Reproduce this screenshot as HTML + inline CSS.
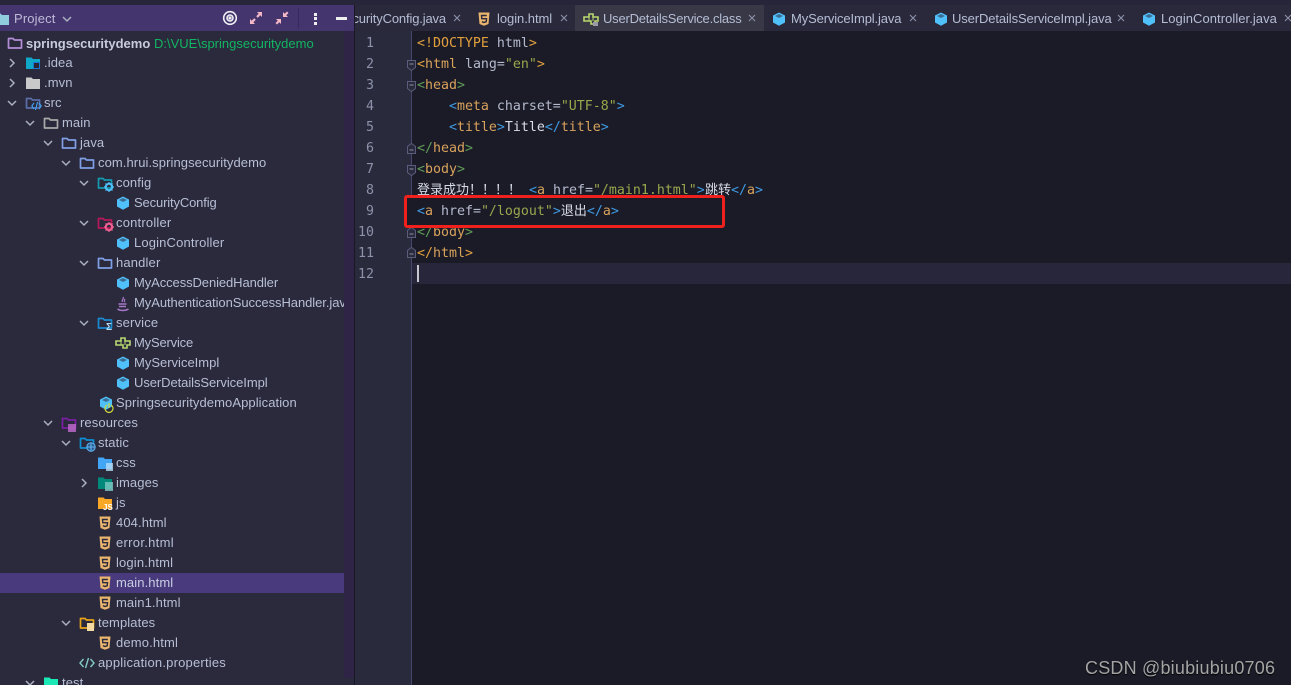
<!DOCTYPE html>
<html lang="zh"><head><meta charset="utf-8"><title>IDE</title>
<style>
html,body{margin:0;padding:0;background:#1b1b27;overflow:hidden}
#p{position:relative;width:1291px;height:685px;overflow:hidden;background:#1b1b27;font-family:"Liberation Sans","Noto Sans CJK SC",sans-serif}
#p div,#p svg{position:absolute}
.t{height:20px;line-height:20px;font-size:13px;color:#b7bfd6;white-space:nowrap;letter-spacing:.1px}
.i{width:16px;height:16px}
.c{font:13.28px/21px "DejaVu Sans Mono","Noto Sans CJK SC",monospace;height:21px;white-space:pre;color:#b4bacd;left:417px}
.n{font:13.28px/21px "DejaVu Sans Mono",monospace;height:21px;color:#8d92aa;width:30px;text-align:right;left:344px}
.b{color:#3f9ae2}.o{color:#e2a03c}.g{color:#5f9e57}.y{color:#d9a25c}.s{color:#9aa64c}.w{color:#d8dce8}.q{color:#b4bacd}
.k{font-size:13px;height:20px;line-height:20px;top:9px;color:#b5bdd4;white-space:nowrap}
.cj{display:inline-block;width:13px;color:#d8dce8;font-size:13px}
</style></head><body>
<div id="p">
<svg width="0" height="0" style="left:0;top:0">
<defs>
<symbol id="dn" viewBox="0 0 12 12"><path d="M2 4l4 4 4-4" fill="none" stroke="#aab0c0" stroke-width="1.500"/></symbol>
<symbol id="rt" viewBox="0 0 12 12"><path d="M4 2l4 4-4 4" fill="none" stroke="#aab0c0" stroke-width="1.500"/></symbol>
<symbol id="fo" viewBox="0 0 16 16"><path d="M1.500 3.500h4.500l1.500 1.500h7v8h-13z" fill="none" stroke="currentColor" stroke-width="1.700" stroke-linejoin="round"/></symbol>
<symbol id="ff" viewBox="0 0 16 16"><path d="M1 2.500h5.500l1.500 1.500h7v10H1z" fill="currentColor"/></symbol>
<symbol id="cu" viewBox="0 0 16 16"><path d="M8 1.500l6 3v7l-6 3.200-6-3.200v-7z" fill="#4fc0fa"/><path d="M4 5L8 3l4 2-4 2z" fill="#2b2a3c" opacity=".55"/></symbol>
<symbol id="h5" viewBox="0 0 16 16"><path d="M2.500 1.500h11l-1 11.500L8 14.800 3.500 13z" fill="#eab56e"/><path d="M10.800 4.500H5.500l.3 3.200h4.700l-.3 3L8 11.500l-2.100-.8" fill="none" stroke="#2b2a3c" stroke-width="1.400"/></symbol>
<symbol id="if" viewBox="0 0 16 16"><path d="M6 3h4v3h5v4h-3v3H8v-3H1V6h5z" fill="none" stroke="#b8d86e" stroke-width="1.600"/><path d="M6 6v4M10 6v4" stroke="#b8d86e"/></symbol>
<symbol id="xx" viewBox="0 0 8 8"><path d="M1 1l6 6M7 1L1 7" stroke="#8d92a8" stroke-width="1.100" fill="none"/></symbol>
</defs></svg>

<!-- chrome -->
<div style="left:0;top:0;width:1291px;height:5px;background:#26253a"></div>
<div style="left:0;top:31px;width:344px;height:654px;background:#2b2a3c"></div>
<div style="left:344px;top:31px;width:10px;height:647px;background:#2f2346"></div>
<div style="left:344px;top:678px;width:10px;height:7px;background:#2b2a3c"></div>
<div style="left:0;top:5px;width:354px;height:26px;background:#45356f"></div>
<div style="left:354px;top:5px;width:1px;height:680px;background:#191926"></div>
<div style="left:355px;top:5px;width:936px;height:26px;background:#2a293c"></div>
<div style="left:355px;top:31px;width:56px;height:654px;background:#292a3c"></div>
<div style="left:411px;top:31px;width:1px;height:654px;background:#45486c"></div>
<div style="left:0;top:573px;width:344px;height:20px;background:#483a7c"></div>
<div style="left:412px;top:263px;width:879px;height:21px;background:#27263a"></div>
<div style="left:417px;top:265px;width:2px;height:17px;background:#c4c6d0"></div>

<!-- project header -->
<svg class="i" style="left:-6px;top:11px;color:#8fcbdc"><use href="#ff"/></svg>
<div class="t" style="left:14px;top:9px;color:#bdbbd6;letter-spacing:.15px">Project</div>
<svg style="left:61px;top:13px" width="12" height="12"><use href="#dn" width="12" height="12"/></svg>
<svg style="left:222px;top:10px" width="16" height="16" viewBox="0 0 16 16" fill="none" stroke="#f0f0f4" stroke-width="1.600"><circle cx="8" cy="8" r="6.300"/><circle cx="8" cy="8" r="3"/><circle cx="8" cy="8" r=".8" fill="#f0f0f4"/></svg>
<svg style="left:249px;top:11px" width="14" height="14" viewBox="0 0 14 14" fill="#f4b8c6"><path d="M8 1h5v5l-1.700-1.700-2.500 2.500-1.600-1.600 2.500-2.500zM6 13H1V8l1.700 1.700 2.500-2.500 1.600 1.600-2.500 2.500z"/></svg>
<svg style="left:275px;top:11px" width="14" height="14" viewBox="0 0 14 14" fill="#f4b8c6"><path d="M13 6H8V1l1.700 1.700L12 .5l1.500 1.500-2.300 2.300zM1 8h5v5l-1.700-1.700L2 13.500.5 12l2.300-2.300z"/></svg>
<div style="left:298px;top:8px;width:1px;height:20px;background:#37295c"></div>
<div style="left:314px;top:13px;width:3px;height:3px;background:#eee"></div>
<div style="left:314px;top:17px;width:3px;height:3px;background:#eee"></div>
<div style="left:314px;top:22px;width:3px;height:3px;background:#eee"></div>
<div style="left:336px;top:17px;width:11px;height:3px;background:#eee"></div>

<!-- tree -->
<div style="left:0;top:1px;width:344px;height:684px;overflow:hidden">
<svg class="i" style="left:7px;top:34px;color:#b48ed6"><use href="#fo"/></svg>
<div class="t" style="left:26px;top:33px;font-weight:bold;color:#c6ccde;letter-spacing:0">springsecuritydemo</div>
<div class="t" style="left:154px;top:33px;color:#12b563;letter-spacing:0">D:\VUE\springsecuritydemo</div>

<svg style="left:6px;top:56px" width="12" height="12"><use href="#rt" width="12" height="12"/></svg>
<svg class="i" style="left:25px;top:54px;color:#10a8c8"><use href="#ff"/></svg>
<div style="left:33px;top:61px;width:7px;height:7px;background:#2a2433;border:1px solid #1976d2;box-sizing:border-box"></div>
<div class="t" style="left:44px;top:52px">.idea</div>

<svg style="left:6px;top:76px" width="12" height="12"><use href="#rt" width="12" height="12"/></svg>
<svg class="i" style="left:25px;top:74px;color:#c9c9c9"><use href="#ff"/></svg>
<div class="t" style="left:44px;top:72px">.mvn</div>

<svg style="left:6px;top:96px" width="12" height="12"><use href="#dn" width="12" height="12"/></svg>
<svg class="i" style="left:25px;top:94px;color:#5a6ea8"><use href="#fo"/></svg>
<svg style="left:31px;top:100px" width="11" height="10" viewBox="0 0 11 10" fill="none" stroke="#42a5f5" stroke-width="1.100"><path d="M3 2L.8 5 3 8M8 2l2.200 3L8 8M6.500 1L4.500 9"/></svg>
<div class="t" style="left:44px;top:92px">src</div>

<svg style="left:24px;top:116px" width="12" height="12"><use href="#dn" width="12" height="12"/></svg>
<svg class="i" style="left:43px;top:114px;color:#a9a9a9"><use href="#fo"/></svg>
<div class="t" style="left:62px;top:112px">main</div>

<svg style="left:42px;top:136px" width="12" height="12"><use href="#dn" width="12" height="12"/></svg>
<svg class="i" style="left:61px;top:134px;color:#7f9fe6"><use href="#fo"/></svg>
<div class="t" style="left:80px;top:132px">java</div>

<svg style="left:60px;top:156px" width="12" height="12"><use href="#dn" width="12" height="12"/></svg>
<svg class="i" style="left:79px;top:154px;color:#7f9fe6"><use href="#fo"/></svg>
<div class="t" style="left:98px;top:152px;letter-spacing:.08px">com.hrui.springsecuritydemo</div>

<svg style="left:78px;top:176px" width="12" height="12"><use href="#dn" width="12" height="12"/></svg>
<svg class="i" style="left:97px;top:174px;color:#149ab0"><use href="#fo"/></svg>
<svg style="left:104px;top:181px" width="10" height="10" viewBox="0 0 10 10"><circle cx="5" cy="5" r="3.200" fill="none" stroke="#4fc0fa" stroke-width="2"/><path d="M5 0v2M5 8v2M0 5h2M8 5h2M1.500 1.500l1.400 1.400M7.100 7.100l1.400 1.400M1.500 8.500l1.400-1.400M7.100 2.900l1.400-1.400" stroke="#4fc0fa" stroke-width="1.200"/></svg>
<div class="t" style="left:116px;top:172px">config</div>

<svg class="i" style="left:115px;top:194px"><use href="#cu"/></svg>
<div class="t" style="left:134px;top:192px;letter-spacing:-.14px">SecurityConfig</div>

<svg style="left:78px;top:216px" width="12" height="12"><use href="#dn" width="12" height="12"/></svg>
<svg class="i" style="left:97px;top:214px;color:#b8185a"><use href="#fo"/></svg>
<svg style="left:104px;top:221px" width="10" height="10" viewBox="0 0 10 10"><circle cx="5" cy="5" r="3.200" fill="none" stroke="#f06292" stroke-width="2"/><path d="M5 0v2M5 8v2M0 5h2M8 5h2M1.500 1.500l1.400 1.400M7.100 7.100l1.400 1.400M1.500 8.500l1.400-1.400M7.100 2.900l1.400-1.400" stroke="#f06292" stroke-width="1.200"/></svg>
<div class="t" style="left:116px;top:212px;letter-spacing:.2px">controller</div>

<svg class="i" style="left:115px;top:234px"><use href="#cu"/></svg>
<div class="t" style="left:134px;top:232px;letter-spacing:.15px">LoginController</div>

<svg style="left:78px;top:256px" width="12" height="12"><use href="#dn" width="12" height="12"/></svg>
<svg class="i" style="left:97px;top:254px;color:#7f9fe6"><use href="#fo"/></svg>
<div class="t" style="left:116px;top:252px;letter-spacing:.15px">handler</div>

<svg class="i" style="left:115px;top:274px"><use href="#cu"/></svg>
<div class="t" style="left:134px;top:272px;letter-spacing:-.09px">MyAccessDeniedHandler</div>

<svg style="left:116px;top:295px" width="14" height="16" viewBox="0 0 14 16" fill="none" stroke="#a678c8" stroke-width="1.200"><path d="M7 1c1.500 2-2 3-.5 5M9 3C8 4.500 8 5 9 6"/><path d="M2.500 8h8M3 10.500h7M1.500 13c3 2 8 2 11 0" stroke-width="1.500"/></svg>
<div class="t" style="left:134px;top:292px;letter-spacing:-.06px">MyAuthenticationSuccessHandler.java</div>

<svg style="left:78px;top:316px" width="12" height="12"><use href="#dn" width="12" height="12"/></svg>
<svg class="i" style="left:97px;top:314px;color:#1a8ad0"><use href="#fo"/></svg>
<div style="left:106px;top:322px;font-size:10px;line-height:10px;color:#b5dcf5;height:10px;font-weight:bold">Σ</div>
<div class="t" style="left:116px;top:312px;letter-spacing:.15px">service</div>

<svg class="i" style="left:115px;top:334px"><use href="#if"/></svg>
<div class="t" style="left:134px;top:332px;letter-spacing:-.18px">MyService</div>
<svg class="i" style="left:115px;top:354px"><use href="#cu"/></svg>
<div class="t" style="left:134px;top:352px;letter-spacing:0">MyServiceImpl</div>
<svg class="i" style="left:115px;top:374px"><use href="#cu"/></svg>
<div class="t" style="left:134px;top:372px;letter-spacing:-.07px">UserDetailsServiceImpl</div>

<svg class="i" style="left:98px;top:394px"><use href="#cu"/></svg>
<svg style="left:104px;top:401px" width="10" height="11" viewBox="0 0 10 11" fill="none" stroke="#cddc39" stroke-width="1.200"><path d="M3 3a4 4 0 1 0 4 0M5 1v5"/></svg>
<div class="t" style="left:116px;top:392px;letter-spacing:.08px">SpringsecuritydemoApplication</div>

<svg style="left:42px;top:416px" width="12" height="12"><use href="#dn" width="12" height="12"/></svg>
<svg class="i" style="left:61px;top:414px;color:#7b1fa2"><use href="#fo"/></svg>
<div style="left:68px;top:423px;width:8px;height:8px;background:#ba68c8;opacity:.85"></div>
<div class="t" style="left:80px;top:412px">resources</div>

<svg style="left:60px;top:436px" width="12" height="12"><use href="#dn" width="12" height="12"/></svg>
<svg class="i" style="left:79px;top:434px;color:#0f8fd4"><use href="#fo"/></svg>
<svg style="left:86px;top:441px" width="10" height="10" viewBox="0 0 10 10" fill="none" stroke="#64b5f6"><circle cx="5" cy="5" r="4.200" fill="#2b5f8f"/><path d="M1 5h8M5 1v8"/></svg>
<div class="t" style="left:98px;top:432px">static</div>

<svg class="i" style="left:97px;top:454px;color:#42a5f5"><use href="#ff"/></svg>
<div style="left:106px;top:462px;width:7px;height:8px;background:#b5dcf5;opacity:.8"></div>
<div class="t" style="left:116px;top:452px">css</div>

<svg style="left:78px;top:476px" width="12" height="12"><use href="#rt" width="12" height="12"/></svg>
<svg class="i" style="left:97px;top:474px;color:#00897b"><use href="#ff"/></svg>
<div style="left:105px;top:481px;width:8px;height:9px;background:#80cbc4;opacity:.8"></div>
<div class="t" style="left:116px;top:472px">images</div>

<svg class="i" style="left:97px;top:494px;color:#f9a825"><use href="#ff"/></svg>
<div style="left:103px;top:502px;height:9px;line-height:9px;font-size:8px;font-weight:bold;color:#fff">JS</div>
<div class="t" style="left:116px;top:492px">js</div>

<svg class="i" style="left:97px;top:514px"><use href="#h5"/></svg>
<div class="t" style="left:116px;top:512px">404.html</div>
<svg class="i" style="left:97px;top:534px"><use href="#h5"/></svg>
<div class="t" style="left:116px;top:532px;letter-spacing:.3px">error.html</div>
<svg class="i" style="left:97px;top:554px"><use href="#h5"/></svg>
<div class="t" style="left:116px;top:552px;letter-spacing:.15px">login.html</div>
<svg class="i" style="left:97px;top:574px"><use href="#h5"/></svg>
<div class="t" style="left:116px;top:572px;color:#c8cee2">main.html</div>
<svg class="i" style="left:97px;top:594px"><use href="#h5"/></svg>
<div class="t" style="left:116px;top:592px">main1.html</div>

<svg style="left:60px;top:616px" width="12" height="12"><use href="#dn" width="12" height="12"/></svg>
<svg class="i" style="left:79px;top:614px;color:#e8a317"><use href="#fo"/></svg>
<div style="left:87px;top:622px;width:7px;height:8px;background:#f5d9a0"></div>
<div class="t" style="left:98px;top:612px">templates</div>

<svg class="i" style="left:97px;top:634px"><use href="#h5"/></svg>
<div class="t" style="left:116px;top:632px;letter-spacing:.15px">demo.html</div>

<svg style="left:79px;top:656px" width="16" height="12" viewBox="0 0 16 12" fill="none" stroke="#80cbc4" stroke-width="1.400"><path d="M4.500 2L1 6l3.500 4M11.500 2L15 6l-3.500 4M9.500 1L6.500 11"/></svg>
<div class="t" style="left:98px;top:652px;letter-spacing:.2px">application.properties</div>

<svg style="left:24px;top:676px" width="12" height="12"><use href="#dn" width="12" height="12"/></svg>
<svg class="i" style="left:43px;top:674px;color:#1de9b6"><use href="#ff"/></svg>
<div class="t" style="left:62px;top:672px">test</div>
</div>

<!-- tabs -->
<div style="left:355px;top:9px;width:91px;height:20px;overflow:hidden"><div class="k" style="right:0;top:0;letter-spacing:-.15px">SecurityConfig.java</div></div>
<svg style="left:453px;top:14px" width="8" height="8"><use href="#xx" width="8" height="8"/></svg>
<svg class="i" style="left:476px;top:11px"><use href="#h5"/></svg>
<div class="k" style="left:497px;letter-spacing:-.05px">login.html</div>
<svg style="left:560px;top:14px" width="8" height="8"><use href="#xx" width="8" height="8"/></svg>
<div style="left:575px;top:5px;width:189px;height:26px;background:#383846"></div>
<svg class="i" style="left:583px;top:11px"><use href="#if"/></svg>
<div style="left:593px;top:22px;width:5px;height:4px;background:#9a9aa6"></div>
<div class="k" style="left:603px;letter-spacing:-.22px">UserDetailsService.class</div>
<svg style="left:748px;top:14px" width="8" height="8"><use href="#xx" width="8" height="8"/></svg>
<svg class="i" style="left:771px;top:11px"><use href="#cu"/></svg>
<div class="k" style="left:791px;letter-spacing:-.13px">MyServiceImpl.java</div>
<svg style="left:909px;top:14px" width="8" height="8"><use href="#xx" width="8" height="8"/></svg>
<svg class="i" style="left:933px;top:11px"><use href="#cu"/></svg>
<div class="k" style="left:952px;letter-spacing:-.11px">UserDetailsServiceImpl.java</div>
<svg style="left:1117px;top:14px" width="8" height="8"><use href="#xx" width="8" height="8"/></svg>
<svg class="i" style="left:1141px;top:11px"><use href="#cu"/></svg>
<div class="k" style="left:1161px;letter-spacing:.05px">LoginController.java</div>
<svg style="left:1284px;top:14px" width="8" height="8"><use href="#xx" width="8" height="8"/></svg>

<!-- line numbers -->
<div class="n" style="top:33px">1</div>
<div class="n" style="top:54px">2</div>
<div class="n" style="top:75px">3</div>
<div class="n" style="top:96px">4</div>
<div class="n" style="top:117px">5</div>
<div class="n" style="top:138px">6</div>
<div class="n" style="top:159px">7</div>
<div class="n" style="top:180px">8</div>
<div class="n" style="top:201px">9</div>
<div class="n" style="top:222px">10</div>
<div class="n" style="top:243px">11</div>
<div class="n" style="top:264px">12</div>

<!-- fold markers -->
<svg style="left:406px;top:59px" width="11" height="13" viewBox="0 0 11 13"><path d="M1.500 1.500h8v7l-4 3-4-3z" fill="#292a3c" stroke="#5a5d7c"/><path d="M3.500 5h4" stroke="#8d92aa"/></svg>
<svg style="left:406px;top:80px" width="11" height="13" viewBox="0 0 11 13"><path d="M1.500 1.500h8v7l-4 3-4-3z" fill="#292a3c" stroke="#5a5d7c"/><path d="M3.500 5h4" stroke="#8d92aa"/></svg>
<svg style="left:406px;top:142px" width="11" height="13" viewBox="0 0 11 13"><path d="M1.500 11.500h8v-7l-4-3-4 3z" fill="#292a3c" stroke="#5a5d7c"/><path d="M3.500 8h4" stroke="#8d92aa"/></svg>
<svg style="left:406px;top:164px" width="11" height="13" viewBox="0 0 11 13"><path d="M1.500 1.500h8v7l-4 3-4-3z" fill="#292a3c" stroke="#5a5d7c"/><path d="M3.500 5h4" stroke="#8d92aa"/></svg>
<svg style="left:406px;top:226px" width="11" height="13" viewBox="0 0 11 13"><path d="M1.500 11.500h8v-7l-4-3-4 3z" fill="#292a3c" stroke="#5a5d7c"/><path d="M3.500 8h4" stroke="#8d92aa"/></svg>
<svg style="left:406px;top:246px" width="11" height="13" viewBox="0 0 11 13"><path d="M1.500 11.500h8v-7l-4-3-4 3z" fill="#292a3c" stroke="#5a5d7c"/><path d="M3.500 8h4" stroke="#8d92aa"/></svg>

<!-- code -->
<div class="c" style="top:33px"><span class="o">&lt;!DOCTYPE</span> <span class="q">html</span><span class="o">&gt;</span></div>
<div class="c" style="top:54px"><span class="o">&lt;</span><span class="y">html</span> <span class="q">lang</span><span class="q">=</span><span class="s">"en"</span><span class="o">&gt;</span></div>
<div class="c" style="top:75px"><span class="g">&lt;</span><span class="y">head</span><span class="g">&gt;</span></div>
<div class="c" style="top:96px">    <span class="b">&lt;</span><span class="y">meta</span> <span class="q">charset=</span><span class="s">"UTF-8"</span><span class="b">&gt;</span></div>
<div class="c" style="top:117px">    <span class="b">&lt;</span><span class="y">title</span><span class="b">&gt;</span><span class="w">Title</span><span class="b">&lt;/</span><span class="y">title</span><span class="b">&gt;</span></div>
<div class="c" style="top:138px"><span class="g">&lt;/</span><span class="y">head</span><span class="g">&gt;</span></div>
<div class="c" style="top:159px"><span class="g">&lt;</span><span class="y">body</span><span class="g">&gt;</span></div>
<div class="c" style="top:180px;width:110px"><span class="cj">登</span><span class="cj">录</span><span class="cj">成</span><span class="cj">功</span><span class="cj">！</span><span class="cj">！</span><span class="cj">！</span><span class="cj">！</span></div>
<div class="c" style="top:180px;left:529px"><span class="b">&lt;</span><span class="y">a</span> <span class="q">href=</span><span class="s">"/main1.html"</span><span class="b">&gt;</span></div>
<div class="c" style="top:180px;left:705px"><span class="cj">跳</span><span class="cj">转</span></div>
<div class="c" style="top:180px;left:731px"><span class="b">&lt;/</span><span class="y">a</span><span class="b">&gt;</span></div>
<div class="c" style="top:222px"><span class="g">&lt;/</span><span class="y">body</span><span class="g">&gt;</span></div>
<div class="c" style="top:243px"><span class="o">&lt;/</span><span class="y">html</span><span class="o">&gt;</span></div>

<!-- red box -->
<div style="left:404px;top:195px;width:321px;height:33px;box-sizing:border-box;border:3px solid #f0201c;border-radius:3px;background:#1b1b27"></div>
<div class="c" style="top:201px"><span class="b">&lt;</span><span class="y">a</span> <span class="q">href=</span><span class="s">"/logout"</span><span class="b">&gt;</span><span class="cj">退</span><span class="cj">出</span><span class="b">&lt;/</span><span class="y">a</span><span class="b">&gt;</span></div>

<!-- watermark -->
<div style="left:1085px;top:656px;height:24px;line-height:24px;font-size:18px;letter-spacing:.2px;color:#a4a4a4;white-space:nowrap;text-shadow:0 1px 1px #000">CSDN @biubiubiu0706</div>
</div>
</body></html>
